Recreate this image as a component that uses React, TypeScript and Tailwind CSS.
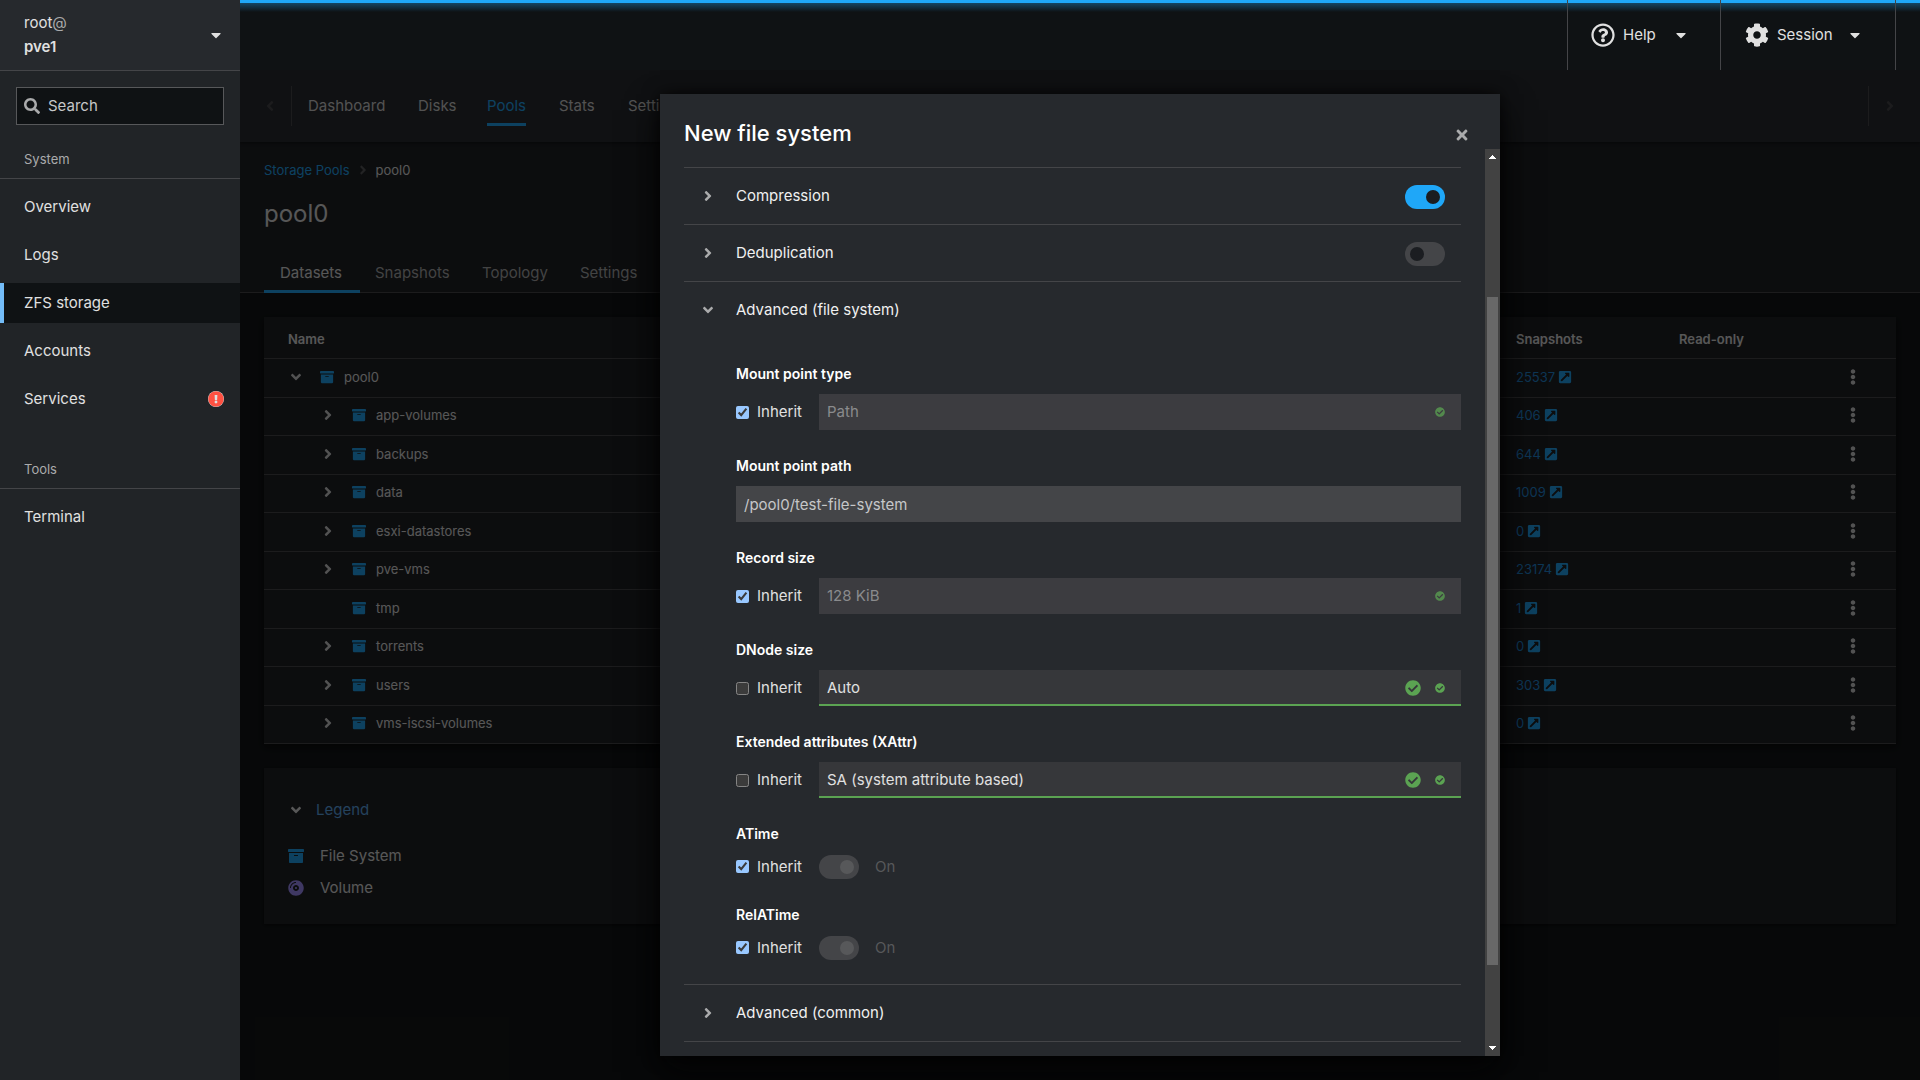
import type { ReactNode } from "react";
import {
  FaAngleDown,
  FaAngleLeft,
  FaAngleRight,
  FaArchive,
  FaCaretDown,
  FaCheckCircle,
  FaCog,
  FaCompactDisc,
  FaEllipsisV,
  FaExclamationCircle,
  FaExternalLinkSquareAlt,
  FaRegQuestionCircle,
  FaSearch,
  FaTimes,
} from "react-icons/fa";

const topTabs = [
  { name: "Dashboard", width: "w-[110px]" },
  { name: "Disks", width: "w-[69px]" },
  { name: "Pools", width: "w-[72px]", active: true },
  { name: "Stats", width: "w-[69px]" },
  { name: "Settings", width: "w-[94px]" },
];

const poolTabs = [
  { name: "Datasets", width: "w-24", active: true },
  { name: "Snapshots", width: "w-[107px]" },
  { name: "Topology", width: "w-[98px]" },
  { name: "Settings", width: "w-[93px]" },
];

const datasets = [
  { name: "pool0", snapshots: 25537, root: true },
  { name: "app-volumes", snapshots: 406 },
  { name: "backups", snapshots: 644 },
  { name: "data", snapshots: 1009 },
  { name: "esxi-datastores", snapshots: 0 },
  { name: "pve-vms", snapshots: 23174 },
  { name: "tmp", snapshots: 1, leaf: true },
  { name: "torrents", snapshots: 0 },
  { name: "users", snapshots: 303 },
  { name: "vms-iscsi-volumes", snapshots: 0 },
];

function NavItem({ label, active, children }: { label: string; active?: boolean; children?: ReactNode }) {
  return (
    <a
      href="#"
      className={
        active
          ? "flex h-10 items-center justify-between border-l-4 border-[#73bcf7] bg-[#0f1214] pr-4 pl-5"
          : "flex h-10 items-center justify-between pr-4 pl-6"
      }
    >
      {label}
      {children}
    </a>
  );
}

function NavGroup({ title, children }: { title: string; children: ReactNode }) {
  return (
    <section>
      <h2 className="border-b border-[#444548] px-6 pb-[9px] text-[13px] leading-5 text-[#aaabac]">{title}</h2>
      <nav className="flex flex-col gap-2 pt-2">{children}</nav>
    </section>
  );
}

function Sidebar() {
  return (
    <aside className="w-60 shrink-0 bg-[#212427]">
      <button className="flex h-[71px] w-full items-center justify-between border-b border-[#444548] bg-[#26292d] pr-4 pl-6 text-left">
        <span className="flex flex-col leading-6">
          <span>
            root<span className="text-[#aaabac]">@</span>
          </span>
          <span className="font-semibold">pve1</span>
        </span>
        <FaCaretDown size={16} />
      </button>
      <div className="mx-4 mt-4 flex h-[38px] items-center gap-2 border border-[#57585a] bg-[#0f1214] px-[7px]">
        <FaSearch size={16} className="text-[#aaabac]" />
        <input
          aria-label="Search"
          placeholder="Search"
          className="min-w-0 flex-1 bg-transparent outline-none placeholder:text-[#c6c7c8]"
        />
      </div>
      <div className="flex flex-col gap-10 pt-6">
        <NavGroup title="System">
          <NavItem label="Overview" />
          <NavItem label="Logs" />
          <NavItem label="ZFS storage" active />
          <NavItem label="Accounts" />
          <NavItem label="Services">
            <FaExclamationCircle size={16} className="rounded-full bg-[#e0e0e0] text-[#fe5142]" />
          </NavItem>
        </NavGroup>
        <NavGroup title="Tools">
          <NavItem label="Terminal" />
        </NavGroup>
      </div>
    </aside>
  );
}

function Masthead() {
  return (
    <header className="relative flex h-[70px] shrink-0 justify-end bg-[#0f1214]">
      <div className="absolute inset-x-0 top-0 h-3 border-t-[3px] border-[#1fa7f8] bg-linear-to-b from-[#1fa7f8]/35 to-transparent" />
      <button className="relative flex w-[153px] items-center border-l border-[#444548] pl-[23px] text-left">
        <FaRegQuestionCircle size={24} className="text-[#e0e0e0]" />
        <span className="ml-2 w-[50px]">Help</span>
        <FaCaretDown size={16} />
      </button>
      <button className="relative flex w-[175px] items-center border-l border-[#444548] pl-6 text-left">
        <FaCog size={24} className="text-[#e0e0e0]" />
        <span className="ml-2 w-[70px]">Session</span>
        <FaCaretDown size={16} />
      </button>
      <div className="relative w-[25px] border-l border-[#444548]" />
    </header>
  );
}

function TopNav() {
  return (
    <div className="relative flex h-[72px] items-center bg-[#26292d] shadow-[0_1px_3px_rgba(3,3,3,0.6)]">
      <button aria-label="Scroll left" disabled className="flex w-[51px] pl-[22px] text-[#444548]">
        <FaAngleLeft size={16} />
      </button>
      <nav className="flex h-10 flex-1 border-l border-[#444548]">
        {topTabs.map((tab) => (
          <a key={tab.name} href="#" className={tab.width + " flex h-10 px-4"}>
            <span
              className={
                tab.active
                  ? "flex border-b-[3px] border-[#1fa7f8] pt-[3px] leading-[34px] text-[#1fa7f8]"
                  : "pt-[3px] leading-[34px] text-[#d2d2d2]"
              }
            >
              {tab.name}
            </span>
          </a>
        ))}
      </nav>
      <button
        aria-label="Scroll right"
        disabled
        className="flex h-10 w-[52px] items-center border-l border-[#444548] pl-[13px] text-[#444548]"
      >
        <FaAngleRight size={16} />
      </button>
    </div>
  );
}

function PoolHeader() {
  return (
    <div className="border-b border-[#444548] bg-[#1b1d21] px-6 pt-4">
      <nav aria-label="Breadcrumb" className="flex h-6 items-center text-[13px]">
        <a href="#" className="text-[#1fa7f8]">
          Storage Pools
        </a>
        <FaAngleRight size={14} className="mx-[6px] text-[#57585a]" />
        <span>pool0</span>
      </nav>
      <h1 className="mt-4 text-2xl leading-8">pool0</h1>
      <div role="tablist" className="mt-6 -mb-px flex h-[39px]">
        {poolTabs.map((tab) => (
          <button
            key={tab.name}
            role="tab"
            className={
              tab.active
                ? tab.width + " h-full border-b-[3px] border-[#1fa7f8] pt-0.5 pl-4 text-left"
                : tab.width + " h-full border-b-[3px] border-transparent pt-0.5 pl-[15px] text-left text-[#aaabac]"
            }
          >
            {tab.name}
          </button>
        ))}
      </div>
    </div>
  );
}

function DatasetTable() {
  return (
    <table className="w-full table-fixed bg-[#1b1d21] text-left text-[13px] shadow-[0_3px_8px_rgba(3,3,3,0.8)]">
      <thead>
        <tr className="h-[41px] border-b border-[#444548]">
          <th className="pt-1 pl-6 font-semibold">Name</th>
          <th className="w-[163px] pt-1 pl-4 font-semibold">Snapshots</th>
          <th className="w-[163px] pt-1 pl-4 font-semibold">Read-only</th>
          <th className="w-[70px]" aria-label="Actions" />
        </tr>
      </thead>
      <tbody>
        {datasets.map((set) => (
          <tr key={set.name} className="border-b border-[#444548] odd:h-[39px] even:h-[38px]">
            <td className={set.root ? "pb-0.5 pl-6" : "pb-0.5 pl-14"}>
              <div className="flex items-center">
                <span className="w-8">
                  {!set.leaf && (
                    <button aria-label={"Toggle " + set.name} className="block text-[#d2d2d2]">
                      {set.root ? <FaAngleDown size={16} /> : <FaAngleRight size={16} />}
                    </button>
                  )}
                </span>
                <FaArchive size={14} className="text-[#1fa7f8]" />
                <span className="ml-2.5">{set.name}</span>
              </div>
            </td>
            <td className="pb-0.5 pl-4">
              <a href="#" className="flex items-center gap-[3px] text-[#1fa7f8]">
                <span className="text-[#1f88d8]">{set.snapshots}</span>
                <FaExternalLinkSquareAlt size={14} />
              </a>
            </td>
            <td />
            <td className="pb-0.5">
              <button aria-label={"Actions for " + set.name} className="ml-[19px] block text-[#d2d2d2]">
                <FaEllipsisV size={16} />
              </button>
            </td>
          </tr>
        ))}
      </tbody>
    </table>
  );
}

function Legend() {
  return (
    <section className="mt-6 bg-[#1b1d21] px-6 pt-6 pb-5 shadow-[0_1px_4px_rgba(3,3,3,0.8)]">
      <button className="flex h-9 items-center gap-3 text-[#5ba8ec]">
        <FaAngleDown size={16} className="text-[#e0e0e0]" />
        Legend
      </button>
      <ul className="mt-3">
        <li className="flex h-8 items-center gap-4">
          <FaArchive size={16} className="text-[#1fa7f8]" />
          File System
        </li>
        <li className="flex h-8 items-center gap-4">
          <FaCompactDisc size={16} className="text-[#a18fff]" />
          Volume
        </li>
      </ul>
    </section>
  );
}

function Switch({ label, on, disabled }: { label: string; on?: boolean; disabled?: boolean }) {
  return (
    <input
      type="checkbox"
      role="switch"
      aria-label={label}
      defaultChecked={on}
      disabled={disabled}
      className="relative h-6 w-10 shrink-0 appearance-none rounded-full bg-[#444548] before:absolute before:top-[5px] before:left-[5px] before:size-3.5 before:rounded-full before:bg-[#1b1d21] checked:bg-[#1fa7f8] checked:before:left-[21px] disabled:bg-[#444548] disabled:before:bg-[#57585a]"
    />
  );
}

function Section({ title, open, children }: { title: string; open?: boolean; children?: ReactNode }) {
  return (
    <div className="flex h-14 items-center justify-between pr-4">
      <button className="flex items-center pl-4 text-[#f0f0f0]">
        {open ? (
          <FaAngleDown size={16} className="text-[#aaabac]" />
        ) : (
          <FaAngleRight size={16} className="text-[#aaabac]" />
        )}
        <span className="ml-5">{title}</span>
      </button>
      {children && <div className="flex pt-0.5">{children}</div>}
    </div>
  );
}

function Inherit({ id, checked }: { id: string; checked?: boolean }) {
  return (
    <label htmlFor={id} className="flex w-[83px] shrink-0 items-center">
      <input id={id} type="checkbox" defaultChecked={checked} className="m-0 mr-2 size-[13px] scheme-dark" />
      Inherit
    </label>
  );
}

function Field({ id, label, children }: { id: string; label: string; children: ReactNode }) {
  return (
    <div>
      <label htmlFor={id} className="mb-2 block text-sm leading-6 font-semibold text-white">
        {label}
      </label>
      <div className="flex items-center">{children}</div>
    </div>
  );
}

function SelectField({ id, label, value, inherit }: { id: string; label: string; value: string; inherit?: boolean }) {
  return (
    <Field id={id} label={label}>
      <Inherit id={id + "-inherit"} checked={inherit} />
      <div className="relative flex-1">
        <select
          id={id}
          disabled={inherit}
          className="block h-9 w-full appearance-none border-b-2 border-[#5ba352] bg-[#36373a] px-2 pt-0.5 text-[#e0e0e0] disabled:border-[#3c3c40] disabled:bg-[#3c3c40] disabled:text-[#8a8b8d] disabled:opacity-100"
        >
          <option>{value}</option>
        </select>
        <div className="pointer-events-none absolute inset-y-0 right-4 flex items-center gap-[14px] text-[#5ba352]">
          {!inherit && <FaCheckCircle size={16} />}
          <FaCheckCircle size={10} className={inherit ? "opacity-75" : ""} />
        </div>
      </div>
    </Field>
  );
}

function SwitchField({ id, label }: { id: string; label: string }) {
  return (
    <Field id={id + "-inherit"} label={label}>
      <div className="flex h-[25px] items-center">
        <Inherit id={id + "-inherit"} checked />
        <Switch label={label} on disabled />
        <span className="ml-4 text-[#57585a]">On</span>
      </div>
    </Field>
  );
}

function Scrollbar() {
  return (
    <div aria-hidden="true" className="flex w-[15px] shrink-0 flex-col items-center bg-[#424242] py-1.5">
      <svg width="7" height="4" viewBox="0 0 7 4" fill="#fff" shapeRendering="crispEdges">
        <path d="M3 0h1v1h1v1h1v1h1v1H0V3h1V2h1V1h1z" />
      </svg>
      <div className="mt-[138px] mb-[81px] w-[11px] flex-1 bg-[#686868]" />
      <svg width="7" height="4" viewBox="0 0 7 4" fill="#fff" shapeRendering="crispEdges">
        <path d="M0 0h7v1H6v1H5v1H4v1H3V3H2V2H1V1H0z" />
      </svg>
    </div>
  );
}

function Dialog() {
  return (
    <div
      role="dialog"
      aria-label="New file system"
      className="flex h-full w-full max-w-[840px] flex-col bg-[#26292d] shadow-[0_16px_32px_rgba(3,3,3,0.8),0_0_16px_rgba(3,3,3,0.7)]"
    >
      <div className="flex h-[55px] shrink-0 items-start justify-between pt-6 pr-[30px] pl-6">
        <h2 className="text-[22px] leading-[31px] font-medium text-white">New file system</h2>
        <button aria-label="Close" className="pt-[9px] text-[#aaabac]">
          <FaTimes size={16} />
        </button>
      </div>
      <div className="flex min-h-0 flex-1">
        <div className="min-w-0 flex-1 overflow-hidden pt-[18px] pr-6 pl-6">
          <div className="border-t border-[#444548]">
            <Section title="Compression">
              <Switch label="Compression" on />
            </Section>
          </div>
          <div className="border-t border-[#444548]">
            <Section title="Deduplication">
              <Switch label="Deduplication" />
            </Section>
          </div>
          <div className="border-t border-[#444548]">
            <Section title="Advanced (file system)" open />
            <div className="flex flex-col gap-6 py-6 pl-[52px]">
              <SelectField id="mount-type" label="Mount point type" value="Path" inherit />
              <Field id="mount-path" label="Mount point path">
                <input
                  id="mount-path"
                  readOnly
                  defaultValue="/pool0/test-file-system"
                  className="h-9 flex-1 bg-[#444548] px-2 text-[#c6c7c8]"
                />
              </Field>
              <SelectField id="record-size" label="Record size" value="128 KiB" inherit />
              <SelectField id="dnode-size" label="DNode size" value="Auto" />
              <SelectField id="xattr" label="Extended attributes (XAttr)" value="SA (system attribute based)" />
              <SwitchField id="atime" label="ATime" />
              <SwitchField id="relatime" label="RelATime" />
            </div>
          </div>
          <div className="border-y border-[#444548]">
            <Section title="Advanced (common)" />
          </div>
        </div>
        <Scrollbar />
      </div>
    </div>
  );
}

export default function App() {
  return (
    <div className="flex h-screen font-['Inter',sans-serif] text-[15px] leading-6 text-[#e0e0e0]">
      <Sidebar />
      <div className="flex min-w-0 flex-1 flex-col">
        <Masthead />
        <main className="relative min-h-0 flex-1 overflow-hidden bg-[#0f1214]">
          <TopNav />
          <PoolHeader />
          <div className="p-6">
            <DatasetTable />
            <Legend />
          </div>
          <div className="absolute inset-0 flex justify-center bg-[#030303]/62 p-6">
            <Dialog />
          </div>
        </main>
      </div>
    </div>
  );
}
